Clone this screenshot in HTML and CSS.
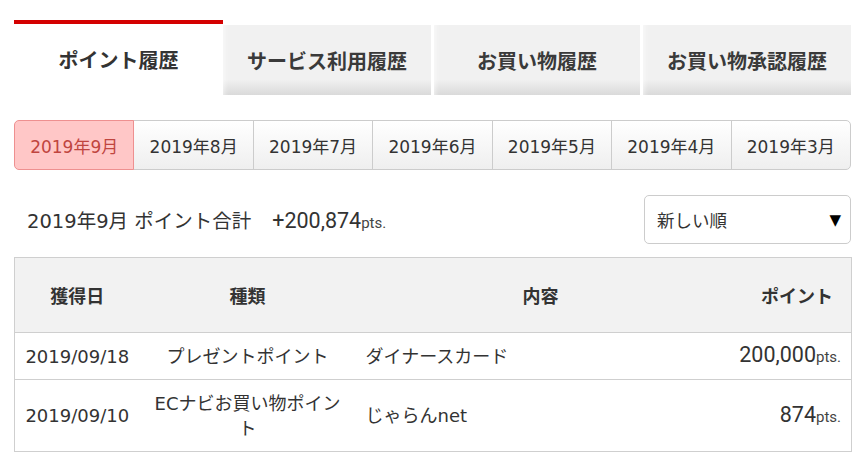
FILE: index.html
```html
<!DOCTYPE html>
<html lang="ja">
<head>
<meta charset="utf-8">
<title>ポイント履歴</title>
<link rel="stylesheet" href="styles.css">
</head>
<body>
<div class="page">
  <nav class="tabs">
    <div class="tab tab-active">ポイント履歴</div>
    <div class="tab tab-2">サービス利用履歴</div>
    <div class="tab tab-3">お買い物履歴</div>
    <div class="tab tab-4">お買い物承認履歴</div>
  </nav>

  <div class="months">
    <div class="month month-active">2019年9月</div>
    <div class="month">2019年8月</div>
    <div class="month">2019年7月</div>
    <div class="month">2019年6月</div>
    <div class="month">2019年5月</div>
    <div class="month">2019年4月</div>
    <div class="month month-last">2019年3月</div>
  </div>

  <div class="summary">
    <p class="total"><span class="total-label">2019年9月 ポイント合計</span><span class="total-num">+200,874<span class="pts">pts.</span></span></p>
    <div class="select"><span>新しい順</span><span class="arrow">▼</span></div>
  </div>

  <table class="history">
    <colgroup>
      <col class="c-date">
      <col class="c-type">
      <col class="c-desc">
      <col class="c-pt">
    </colgroup>
    <thead>
      <tr>
        <th class="th-center">獲得日</th>
        <th class="th-center">種類</th>
        <th class="th-center">内容</th>
        <th class="th-right">ポイント</th>
      </tr>
    </thead>
    <tbody>
      <tr class="row-1">
        <td class="td-center">2019/09/18</td>
        <td class="td-center">プレゼントポイント</td>
        <td class="td-left">ダイナースカード</td>
        <td class="td-right"><span class="big">200,000</span><span class="pts">pts.</span></td>
      </tr>
      <tr class="row-2">
        <td class="td-center">2019/09/10</td>
        <td class="td-center">ECナビお買い物ポイント</td>
        <td class="td-left">じゃらんnet</td>
        <td class="td-right"><span class="big">874</span><span class="pts">pts.</span></td>
      </tr>
    </tbody>
  </table>
</div>
</body>
</html>
```

FILE: styles.css
```css
* { box-sizing: border-box; }

body {
  margin: 0;
  background: #fff;
  color: #333;
  font-family: "DejaVu Sans", "Noto Sans CJK JP", sans-serif;
}

.page {
  width: 851px;
  padding: 20px 0 0 14px;
}

/* Tabs */
.tabs {
  display: flex;
  align-items: flex-end;
  height: 75px;
}

.tab {
  display: flex;
  align-items: center;
  justify-content: center;
  height: 70px;
  font-size: 20px;
  font-weight: bold;
  color: #3a3a3a;
  background: linear-gradient(to bottom, #f1f1f1 0%, #f1f1f1 78%, #dadada 100%);
  box-shadow: inset 6px 0 6px -6px rgba(255,255,255,0.9);
}

.tab-active {
  width: 209px;
  height: 75px;
  background: #fff;
  border-top: 4px solid #d40000;
  box-shadow: none;
  color: #333;
}

.tab-2 { width: 208px; }
.tab-3 { width: 206px; margin-left: 3px; }
.tab-4 { width: 208px; margin-left: 3px; }

/* Months */
.months {
  display: flex;
  margin-top: 25px;
  width: 837px;
  height: 50px;
}

.month {
  flex: 1 1 0;
  display: flex;
  align-items: center;
  justify-content: center;
  border: 1px solid #ccc;
  margin-left: -1px;
  font-size: 17px;
  color: #333;
  background: linear-gradient(to bottom, #ffffff 0%, #efefef 100%);
}

.month-active {
  margin-left: 0;
  position: relative;
  z-index: 1;
  background: #ffc7c7;
  border-color: #ee9090;
  color: #c0453f;
  border-radius: 5px 0 0 5px;
}

.month-last {
  border-radius: 0 5px 5px 0;
}

/* Summary */
.summary {
  display: flex;
  align-items: center;
  justify-content: space-between;
  width: 837px;
  margin-top: 25px;
}

.total {
  margin: 0;
  padding-left: 13px;
  display: flex;
  align-items: baseline;
}

.total-label {
  font-size: 19.5px;
}

.total-num {
  margin-left: 21px;
  font-family: Roboto, "Liberation Sans", sans-serif;
  font-size: 21.5px;
  color: #333;
}

.pts {
  font-family: Roboto, "Liberation Sans", sans-serif;
  font-size: 15px;
  color: #444;
}

.select {
  width: 207px;
  height: 49px;
  border: 1px solid #ccc;
  border-radius: 5px;
  display: flex;
  align-items: center;
  justify-content: space-between;
  padding: 0 9px 0 12px;
  font-size: 17.5px;
  color: #333;
}

.arrow {
  font-size: 15px;
  color: #000;
}

/* Table */
.history {
  margin-top: 13px;
  width: 837px;
  border-collapse: collapse;
  table-layout: fixed;
  border: 1px solid #cfcfcf;
}

.c-date { width: 125px; }
.c-type { width: 216px; }
.c-desc { width: 370px; }
.c-pt { width: 126px; }

.history th {
  height: 75px;
  background: #f2f2f2;
  font-size: 18px;
  font-weight: bold;
  color: #333;
  border-bottom: 1px solid #cfcfcf;
  padding: 0 10px;
}

.history td {
  font-size: 18px;
  line-height: 25px;
  color: #333;
  padding: 0 10px;
  border-bottom: 1px solid #cfcfcf;
}

.row-1 td { height: 47px; }
.row-2 td { height: 72px; }

.th-center, .td-center { text-align: center; }
.th-right { text-align: right; padding-right: 18px !important; }
.td-left { text-align: left; }
.td-right { text-align: right; padding-right: 10px; }

.big {
  font-family: Roboto, "Liberation Sans", sans-serif;
  font-size: 21.5px;
}
```
